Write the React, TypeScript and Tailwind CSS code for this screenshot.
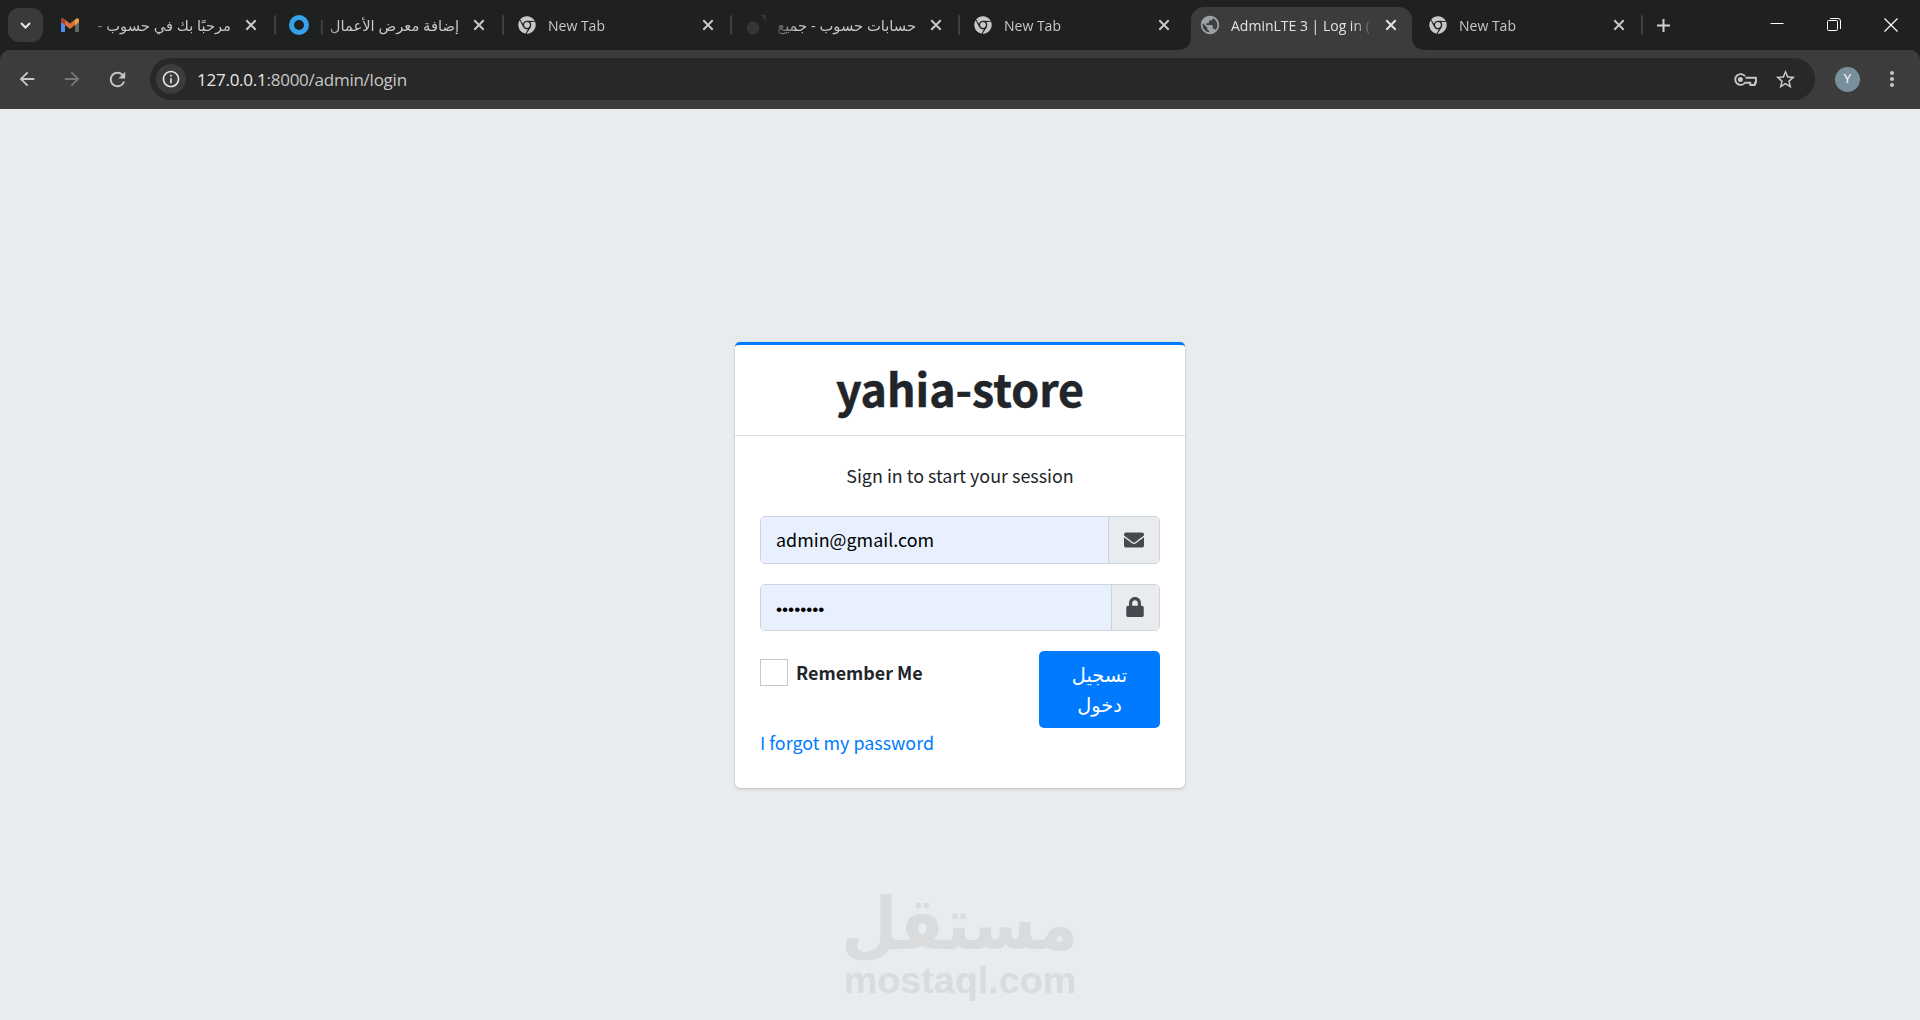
import type { ReactNode } from 'react';
import clsx from 'clsx';
import { FaEnvelope, FaLock, FaChrome } from 'react-icons/fa';
import {
  MdArrowBack,
  MdArrowForward,
  MdInfoOutline,
  MdMoreVert,
  MdPublic,
  MdRefresh,
  MdStarBorder,
} from 'react-icons/md';

interface Tab {
  title: string;
  icon: ReactNode;
  rtl?: boolean;
  active?: boolean;
  separator?: boolean;
}

const GmailIcon = () => (
  <svg className="h-[14px] w-[18px]" viewBox="0 0 18 14">
    <path d="M0 3v10q0 1 1 1h3V5z" fill="#4f8df5" />
    <path d="M18 3v10q0 1-1 1h-3V5z" fill="#5d6a66" />
    <path d="M14 1.5 16 .3q2-.6 2 2V4l-4 3.500z" fill="#e8a33d" />
    <path d="M0 4V2.300Q.2 0 2.300.4L9 5.500l5-4v5.500l-5 4-5-4z" fill="#d9703a" />
    <path d="M0 4V2.300Q.2 0 2.300.4L4 1.600V7z" fill="#a8402f" />
  </svg>
);

const KeyIcon = () => (
  <svg className="mr-[17px] ml-auto h-[13px] w-[23px]" viewBox="0 0 23 13" fill="none" stroke="currentColor" strokeWidth="1.900">
    <path d="M11 3.300A5.400 5.400 0 1 0 11 9.700h5.300v2.300h4.600V9.700h1.100V4.800H11.500" strokeLinejoin="round" />
    <circle cx="6.400" cy="6.500" r="2.500" fill="currentColor" stroke="none" />
  </svg>
);

const tabs: Tab[] = [
  { title: 'مرحبًا بك في حسوب -', icon: <GmailIcon />, rtl: true, separator: true },
  {
    title: 'إضافة معرض الأعمال |',
    icon: <div className="h-5 w-5 rounded-full border-[5px] border-[#34a3ea]" />,
    rtl: true,
    separator: true,
  },
  { title: 'New Tab', icon: <FaChrome className="h-[18px] w-[18px]" />, separator: true },
  {
    title: 'حسابات حسوب - جميع',
    icon: (
      <svg className="h-5 w-5" viewBox="0 0 20 20" fill="#343636">
        <circle cx="7" cy="13" r="6.500" />
        <path d="M13 0h7v8q-1-6-7-8z" />
      </svg>
    ),
    rtl: true,
    separator: true,
  },
  { title: 'New Tab', icon: <FaChrome className="h-[18px] w-[18px]" /> },
  {
    title: 'AdminLTE 3 | Log in (v2)',
    icon: <MdPublic className="-m-[2px] h-[22px] w-[22px] text-[#9aa0a6]" />,
    active: true,
  },
  { title: 'New Tab', icon: <FaChrome className="h-[18px] w-[18px]" />, separator: true },
];

function BrowserTab({ title, icon, rtl, active, separator }: Tab) {
  return (
    <div
      className={clsx(
        'relative flex h-[50px] w-[228px] shrink-0 items-center pl-[14px] text-[#c7c7c7] first-of-type:w-[229px] nth-of-type-[2]:pl-[13px]',
        active && '-ml-px'
      )}
    >
      {active && (
        <>
          <div className="absolute top-[7px] right-[3px] bottom-0 left-1 rounded-t-[13px] bg-[#3c3c3c]" />
          <svg className="absolute bottom-0 -left-[10px] h-[14px] w-[14px]" viewBox="0 0 14 14">
            <path d="M14 0v14H0Q14 14 14 0z" fill="#3c3c3c" />
          </svg>
          <svg className="absolute -right-[11px] bottom-0 h-[14px] w-[14px]" viewBox="0 0 14 14">
            <path d="M0 0v14h14Q0 14 0 0z" fill="#3c3c3c" />
          </svg>
        </>
      )}
      <div className="relative flex w-[30px] items-center">{icon}</div>
      <div
        dir={rtl ? 'rtl' : 'ltr'}
        className={clsx(
          'relative h-[26px] w-[140px] overflow-hidden whitespace-nowrap',
          rtl
            ? "text-[14.700px] leading-[26px] font-['Segoe_UI','Noto_Sans','DejaVu_Sans',sans-serif] [mask-image:linear-gradient(to_left,black_120px,transparent_145px)]"
            : "text-[14px] leading-[28px] font-['Segoe_UI','Open_Sans',sans-serif] [mask-image:linear-gradient(to_right,black_122px,transparent_142px)]",
          active && 'text-[#e3e3e3]'
        )}
      >
        {title}
      </div>
      <svg
        className={clsx('relative ml-[14px] h-3 w-3', active && 'text-[#e3e3e3]')}
        viewBox="0 0 12 12"
        stroke="currentColor"
        strokeWidth="2"
      >
        <path d="m1.300 1.300 9.400 9.400m0-9.400-9.400 9.400" />
      </svg>
      {separator && <div className="ml-auto h-5 w-[2px] rounded-full bg-[#3f4040]" />}
    </div>
  );
}

function TabStrip() {
  return (
    <div className="flex h-[50px] items-center bg-[#1f2120] pl-2">
      <button className="mr-1 flex h-[34px] w-[35px] items-center justify-center rounded-[11px] bg-[#3a3a3a] text-[#e3e3e3]">
        <svg className="h-[7px] w-[11px]" viewBox="0 0 11 7" fill="none" stroke="currentColor" strokeWidth="2.200">
          <path d="m1 1 4.500 4.500L10 1" />
        </svg>
      </button>
      {tabs.map((tab, i) => (
        <BrowserTab key={i} {...tab} />
      ))}
      <svg className="ml-[14px] h-[13px] w-[13px] text-[#d0d0d0]" viewBox="0 0 13 13" stroke="currentColor" strokeWidth="2">
        <path d="M6.500 0v13M0 6.500h13" />
      </svg>
      <div className="mr-[22px] ml-auto flex items-center gap-[43px] text-white">
        <svg className="h-[14px] w-[14px]" viewBox="0 0 14 14" stroke="currentColor">
          <path d="M.5 5.500h13" />
        </svg>
        <svg className="h-[14px] w-[14px]" viewBox="0 0 14 14" fill="none" stroke="currentColor">
          <rect x=".5" y="2.500" width="10" height="10" rx="1" />
          <path d="M3 .5h8q2.500 0 2.500 2.500v8" />
        </svg>
        <svg className="h-[14px] w-[14px]" viewBox="0 0 14 14" stroke="currentColor" strokeWidth="1.200">
          <path d="m.5.5 13 13m0-13-13 13" />
        </svg>
      </div>
    </div>
  );
}

function Toolbar() {
  return (
    <div className="bg-[#1f2120]">
      <div className="flex h-[59px] items-center rounded-t-[10px] bg-[#3c3c3c] pb-px pl-4 text-[#c7c7c7]">
        <MdArrowBack className="h-[22px] w-[22px]" />
        <MdArrowForward className="ml-[23px] h-[22px] w-[22px] text-[#767878]" />
        <MdRefresh className="ml-[23px] h-[23px] w-[23px]" />
        <div className="ml-[21px] flex h-[42px] w-[1665px] items-center rounded-full bg-[#282828] pl-[6px]">
          <div className="flex h-[30px] w-[30px] items-center justify-center rounded-full bg-[#3c3c3c] text-[#e3e3e3]">
            <MdInfoOutline className="h-5 w-5" />
          </div>
          <div className="ml-[11px] pt-px text-[17px] leading-6 tracking-[-0.25px] font-['Segoe_UI','Open_Sans',sans-serif]">
            <span className="text-[#e8e8e8]">127.0.0.1</span>:8000/admin/login
          </div>
          <KeyIcon />
          <MdStarBorder className="mr-[18px] h-[23px] w-[23px]" />
        </div>
        <div className="ml-5 flex h-[25px] w-[25px] items-center justify-center rounded-full bg-[#78909c] text-[13px] text-white font-['Open_Sans',sans-serif]">
          Y
        </div>
        <MdMoreVert className="ml-5 h-6 w-6" />
      </div>
    </div>
  );
}

export default function App() {
  return (
    <div className="flex h-[1020px] w-[1920px] flex-col overflow-hidden bg-[#e9ecef]">
      <TabStrip />
      <Toolbar />

      <main className="flex flex-1 flex-col items-center pt-[233px] text-[17.900px] leading-[30px] text-[#212529] font-['Source_Sans_Pro','Noto_Sans_CJK_SC',sans-serif]">
        <div className="h-[446px] w-[450px] rounded-[5px] border-t-[3px] border-[#007bff] bg-white shadow-[0_0_1px_rgba(0,0,0,0.125),0_1px_3px_rgba(0,0,0,0.2)]">
          <div className="h-[91px] border-b border-[#dfdfdf] pt-[13px] text-center">
            <h1 className="text-[44.700px] leading-[60px] font-bold [-webkit-text-stroke:0.5px_#212529]">yahia-store</h1>
          </div>

          <form className="px-[25px]">
            <p className="pt-6 text-center">Sign in to start your session</p>

            <div className="mt-[26px] flex h-12 overflow-hidden rounded-[5px] border border-[#ced4da]">
              <input
                type="email"
                defaultValue="admin@gmail.com"
                className="min-w-0 flex-1 bg-[#e8f0fe] px-[15px] pb-[2px] text-black outline-none"
              />
              <div className="flex w-[51px] items-center justify-center border-l border-[#ced4da] bg-[#e9ecef] pb-px text-[#444b50]">
                <FaEnvelope className="h-5 w-5" />
              </div>
            </div>

            <div className="mt-5 flex h-[47px] overflow-hidden rounded-[5px] border border-[#ced4da]">
              <input
                type="password"
                defaultValue="password"
                className="min-w-0 flex-1 bg-[#e8f0fe] px-[15px] pt-[2px] text-[17.300px] text-black outline-none font-['Liberation_Sans',sans-serif]"
              />
              <div className="flex w-12 items-center justify-center border-l border-[#ced4da] bg-[#e9ecef] pr-px pb-px text-[#444b50]">
                <FaLock className="h-5 w-[18px]" />
              </div>
            </div>

            <div className="mt-5 flex items-start justify-between">
              <label className="mt-[7px] flex h-7 items-center gap-2 font-bold">
                <span className="h-[27px] w-7 border border-[#c4c8cc] bg-white" />
                Remember Me
              </label>
              <button
                type="submit"
                dir="rtl"
                className="h-[77px] w-[121px] rounded-[5px] bg-[#007bff] px-[15px] text-[19.300px] leading-[30px] text-white font-['Segoe_UI','Noto_Sans','DejaVu_Sans',sans-serif]"
              >
                تسجيل دخول
              </button>
            </div>

            <a href="#" className="-mt-px block text-[#007bff]">
              I forgot my password
            </a>
          </form>
        </div>

        <div className="mt-[98px] flex w-[230px] flex-col items-center text-[#d9dbdd]">
          <div
            dir="rtl"
            className="h-[75px] scale-x-90 text-[72px] leading-[77px] font-bold whitespace-nowrap font-['DejaVu_Sans',sans-serif]"
          >
            مستقل
          </div>
          <div className="text-[37.700px] leading-[38px] font-bold font-['Liberation_Sans',sans-serif]">mostaql.com</div>
        </div>
      </main>
    </div>
  );
}
